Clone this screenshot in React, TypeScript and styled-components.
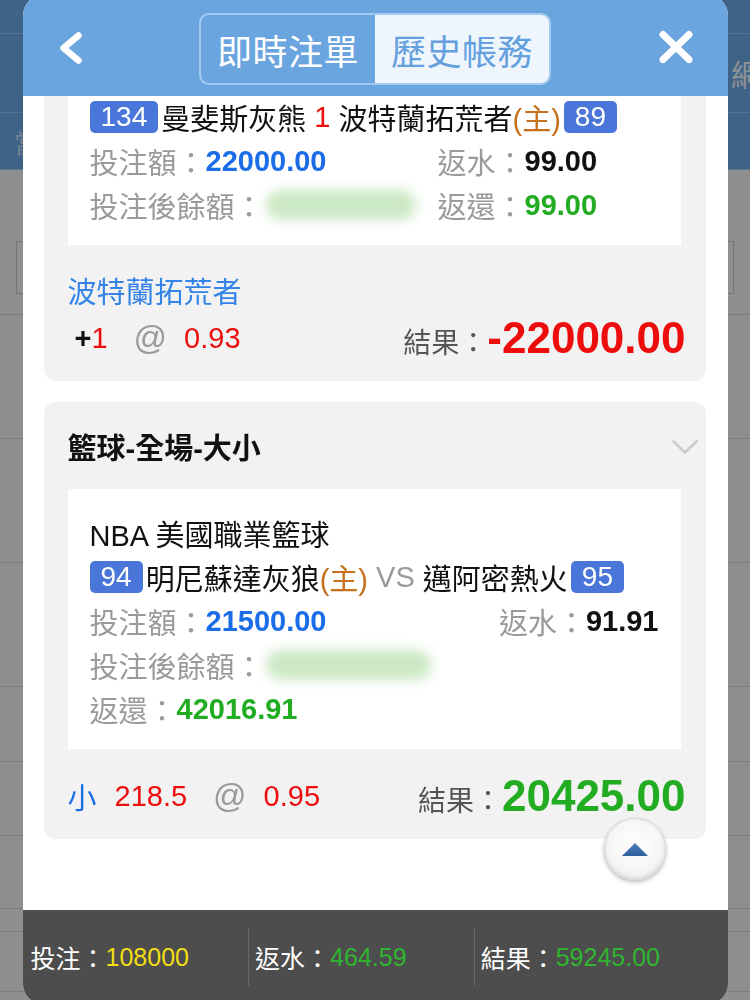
import React, { useLayoutEffect, useRef } from "react";
import styled, { createGlobalStyle } from "styled-components";

const GlobalStyle = createGlobalStyle`
  html, body { margin: 0; padding: 0; }
  body {
    width: 750px;
    height: 1000px;
    overflow: hidden;
    font-family: "Liberation Sans", "Noto Sans CJK TC", sans-serif;
    -webkit-font-smoothing: antialiased;
  }
  * { box-sizing: border-box; }
`;

/* ---------- background page ---------- */
const Root = styled.div`
  font-family: "Liberation Sans", "Noto Sans CJK TC", sans-serif;
`;

const Page = styled.div`
  width: 750px;
  height: 1000px;
  background: #eeeeee;
  display: flex;
  flex-direction: column;
  overflow: hidden;
`;

const PageHeader = styled.div`
  height: 170px;
  flex: none;
  background: #6aa5e0;
  display: flex;
  flex-direction: column;
`;

const HeaderStrip = styled.div<{ $h: number; $pad: number; $dim?: boolean }>`
  height: ${(p) => p.$h}px;
  flex: none;
  border-bottom: 1px solid rgba(255, 255, 255, 0.3);
  display: flex;
  align-items: center;
  padding-left: ${(p) => p.$pad}px;
  white-space: nowrap;
  overflow: hidden;
  color: ${(p) => (p.$dim ? "rgba(255,255,255,0.55)" : "rgba(255,255,255,0.9)")};
  font-size: ${(p) => (p.$dim ? 26 : 30)}px;
`;

const FilterBar = styled.div`
  height: 145px;
  flex: none;
  padding-top: 71px;
  border-bottom: 1px solid #cfcfcf;
`;

const FilterBox = styled.div`
  height: 53px;
  margin: 0 16px;
  border: 1px solid #b6ceb6;
  background: #f1f1f1;
`;

const ListRow = styled.div<{ $h: number }>`
  height: ${(p) => p.$h}px;
  flex: none;
  border-bottom: 1px solid #d0d0d0;
`;

/* ---------- overlay & modal ---------- */
const Overlay = styled.div`
  position: fixed;
  inset: 0;
  background: rgba(0, 0, 0, 0.4);
  display: flex;
  justify-content: center;
  align-items: flex-start;
`;

const Modal = styled.div`
  position: relative;
  width: 705px;
  height: 1010px;
  margin-top: -6px;
  border-radius: 22px 22px 20px 20px;
  overflow: hidden;
  background: #ffffff;
  display: flex;
  flex-direction: column;
`;

const Header = styled.header`
  height: 102px;
  flex: none;
  padding: 6px 34px 0;
  background: #6aa5e0;
  display: grid;
  grid-template-columns: 1fr auto 1fr;
  align-items: center;
`;

const IconButton = styled.div<{ $end?: boolean }>`
  justify-self: ${(p) => (p.$end ? "end" : "start")};
  display: flex;
  align-items: center;
  margin-top: ${(p) => (p.$end ? -2 : 0)}px;
`;

const Tabs = styled.div`
  display: flex;
  width: 352px;
  height: 72px;
  margin-top: 2px;
  border: 2px solid #a3cbf2;
  border-radius: 10px;
  overflow: hidden;
`;

const Tab = styled.div<{ $active?: boolean }>`
  flex: 1;
  display: flex;
  align-items: center;
  justify-content: center;
  font-size: 35px;
  letter-spacing: 0.5px;
  color: ${(p) => (p.$active ? "#64a0de" : "#ffffff")};
  background: ${(p) => (p.$active ? "#eef5fc" : "transparent")};
`;

const Body = styled.div`
  flex: 1;
  overflow: hidden;
`;

const BodyInner = styled.div`
  padding: 20px 22px 90px 21px;
  display: flex;
  flex-direction: column;
  gap: 21px;
`;

const Card = styled.section`
  background: #f2f2f2;
  border-radius: 12px;
  padding: 0 25px 18px 24px;
  display: flex;
  flex-direction: column;
`;

const TitleRow = styled.div`
  height: 87px;
  display: flex;
  align-items: center;
  justify-content: space-between;
`;

const Title = styled.h3`
  margin: 0;
  font-size: 29px;
  font-weight: 700;
  color: #111;
`;

const Chevron = styled.svg`
  margin-right: -18px;
  margin-top: 2px;
`;

const Detail = styled.div`
  background: #ffffff;
  padding: 22px 22px 18px;
  display: flex;
  flex-direction: column;
`;

const Line = styled.div<{ $split?: boolean; $spread?: boolean }>`
  height: 44px;
  font-size: 29px;
  color: #111;
  white-space: nowrap;
  display: ${(p) => (p.$split ? "grid" : "flex")};
  grid-template-columns: 348px 1fr;
  align-items: center;
  justify-content: ${(p) => (p.$spread ? "space-between" : "flex-start")};
`;

const Cell = styled.div`
  display: flex;
  align-items: center;
`;

const Label = styled.span`
  color: #9a9a9a;
`;

const Value = styled.span<{ $c: string }>`
  font-weight: 700;
  color: ${(p) => p.$c};
`;

const Badge = styled.span`
  display: inline-flex;
  align-items: center;
  height: 32px;
  padding: 0 11px;
  margin: 0 3px;
  border-radius: 5px;
  background: #4a76d9;
  color: #ffffff;
  font-size: 28px;
  &:first-child { margin-left: 0; }
`;

const Tint = styled.span<{ $c: string }>`
  color: ${(p) => p.$c};
  white-space: pre;
`;

const Blur = styled.span<{ $w: number }>`
  display: inline-block;
  width: ${(p) => p.$w}px;
  height: 30px;
  margin-left: 2px;
  border-radius: 15px;
  background: #cbe8c4;
  filter: blur(6px);
`;

const Pick = styled.div`
  height: 46px;
  margin-top: 22px;
  display: flex;
  align-items: center;
  font-size: 29px;
  color: #3383e8;
`;

const BetRow = styled.div<{ $first?: boolean }>`
  height: 50px;
  margin-top: ${(p) => (p.$first ? 22 : 0)}px;
  margin-right: -5px;
  display: flex;
  align-items: center;
  justify-content: space-between;
  white-space: nowrap;
`;

const Odds = styled.div`
  display: flex;
  align-items: center;
  font-size: 29px;
`;

const OddsPart = styled.span<{ $c: string; $ml?: number; $bold?: boolean }>`
  color: ${(p) => p.$c};
  margin-left: ${(p) => p.$ml ?? 0}px;
  font-weight: ${(p) => (p.$bold ? 700 : 400)};
`;

const At = styled.span`
  color: #9a9a9a;
  font-size: 33px;
  margin: 0 17px 0 26px;
`;

const Result = styled.div`
  display: flex;
  align-items: baseline;
`;

const ResultLabel = styled.span`
  font-size: 28px;
  color: #555;
`;

const ResultValue = styled.span<{ $c: string }>`
  font-size: 44px;
  font-weight: 700;
  color: ${(p) => p.$c};
`;

const ScrollTop = styled.button`
  position: absolute;
  left: 581px;
  top: 824px;
  width: 62px;
  height: 62px;
  padding: 0;
  border-radius: 50%;
  border: 1px solid #d4d4d4;
  background: radial-gradient(circle at 50% 45%, #ffffff 0%, #f6f6f6 55%, #e2e2e2 100%);
  box-shadow: 0 2px 4px rgba(0, 0, 0, 0.28), inset 0 -2px 3px rgba(0, 0, 0, 0.06);
  display: flex;
  align-items: center;
  justify-content: center;
`;

const Footer = styled.footer`
  height: 94px;
  flex: none;
  background: #4d4d4d;
  display: flex;
  align-items: center;
`;

const Stat = styled.div`
  width: 32%;
  height: 58px;
  padding-left: 8px;
  display: flex;
  align-items: center;
  font-size: 25px;
  color: #ffffff;
  white-space: nowrap;
  & + & {
    border-left: 1px solid #686868;
    padding-left: 6px;
  }
`;

const StatValue = styled.span<{ $c: string }>`
  color: ${(p) => p.$c};
`;

const RED = "#ee0d0d";
const BLUE = "#1a6de6";
const GREEN = "#22ac22";
const ORANGE = "#c6701c";

const ChevronDown = () => (
  <Chevron width="28" height="16" viewBox="0 0 28 16">
    <polyline points="1.5,1.5 14,13.5 26.5,1.5" fill="none" stroke="#cccccc" strokeWidth="2.5" />
  </Chevron>
);

export default function App() {
  const bodyRef = useRef<HTMLDivElement>(null);
  const firstRef = useRef<HTMLElement>(null);

  useLayoutEffect(() => {
    document.documentElement.lang = "zh-Hant-TW";
    const body = bodyRef.current;
    const first = firstRef.current;
    if (body && first) {
      body.scrollTop = first.offsetTop - body.offsetTop + 154;
    }
  }, []);

  return (
    <Root lang="zh-Hant-TW">
      <GlobalStyle />
      <Page>
        <PageHeader>
          <HeaderStrip $h={34} $pad={0} />
          <HeaderStrip $h={79} $pad={731}>網站公告</HeaderStrip>
          <HeaderStrip $h={57} $pad={14} $dim>當日帳務</HeaderStrip>
        </PageHeader>
        <FilterBar>
          <FilterBox />
        </FilterBar>
        {[124, 124, 124, 75, 74, 73, 23, 60].map((h, i) => (
          <ListRow key={i} $h={h} />
        ))}
      </Page>

      <Overlay>
        <Modal>
          <Header>
            <IconButton>
              <svg width="26" height="32" viewBox="0 0 26 32">
                <polyline
                  points="21.5,3.5 6.5,16 21.5,28.5"
                  fill="none"
                  stroke="#ffffff"
                  strokeWidth="6.5"
                  strokeLinecap="round"
                  strokeLinejoin="round"
                />
              </svg>
            </IconButton>
            <Tabs>
              <Tab>即時注單</Tab>
              <Tab $active>歷史帳務</Tab>
            </Tabs>
            <IconButton $end>
              <svg width="36" height="34" viewBox="0 0 36 34">
                <path d="M5 4.5 L31 29.5 M31 4.5 L5 29.5" stroke="#ffffff" strokeWidth="7" strokeLinecap="round" />
              </svg>
            </IconButton>
          </Header>

          <Body ref={bodyRef}>
            <BodyInner>
              <Card ref={firstRef}>
                <TitleRow>
                  <Title>籃球-全場-讓分</Title>
                  <ChevronDown />
                </TitleRow>
                <Detail>
                  <Line>NBA 美國職業籃球</Line>
                  <Line>
                    <Badge>134</Badge>曼斐斯灰熊<Tint $c={RED}> 1 </Tint>波特蘭拓荒者
                    <Tint $c={ORANGE}>(主)</Tint>
                    <Badge>89</Badge>
                  </Line>
                  <Line $split>
                    <Cell>
                      <Label>投注額：</Label>
                      <Value $c={BLUE}>22000.00</Value>
                    </Cell>
                    <Cell>
                      <Label>返水：</Label>
                      <Value $c="#111">99.00</Value>
                    </Cell>
                  </Line>
                  <Line $split>
                    <Cell>
                      <Label>投注後餘額：</Label>
                      <Blur $w={150} />
                    </Cell>
                    <Cell>
                      <Label>返還：</Label>
                      <Value $c={GREEN}>99.00</Value>
                    </Cell>
                  </Line>
                </Detail>
                <Pick>波特蘭拓荒者</Pick>
                <BetRow>
                  <Odds>
                    <OddsPart $c="#111" $ml={7} $bold>+</OddsPart>
                    <OddsPart $c={RED}>1</OddsPart>
                    <At>@</At>
                    <OddsPart $c={RED}>0.93</OddsPart>
                  </Odds>
                  <Result>
                    <ResultLabel>結果：</ResultLabel>
                    <ResultValue $c={RED}>-22000.00</ResultValue>
                  </Result>
                </BetRow>
              </Card>

              <Card>
                <TitleRow>
                  <Title>籃球-全場-大小</Title>
                  <ChevronDown />
                </TitleRow>
                <Detail>
                  <Line>NBA 美國職業籃球</Line>
                  <Line>
                    <Badge>94</Badge>明尼蘇達灰狼<Tint $c={ORANGE}>(主)</Tint>
                    <Tint $c="#9a9a9a"> VS </Tint>邁阿密熱火<Badge>95</Badge>
                  </Line>
                  <Line $spread>
                    <Cell>
                      <Label>投注額：</Label>
                      <Value $c={BLUE}>21500.00</Value>
                    </Cell>
                    <Cell>
                      <Label>返水：</Label>
                      <Value $c="#111">91.91</Value>
                    </Cell>
                  </Line>
                  <Line>
                    <Label>投注後餘額：</Label>
                    <Blur $w={165} />
                  </Line>
                  <Line>
                    <Label>返還：</Label>
                    <Value $c={GREEN}>42016.91</Value>
                  </Line>
                </Detail>
                <BetRow $first>
                  <Odds>
                    <OddsPart $c={BLUE}>小</OddsPart>
                    <OddsPart $c={RED} $ml={18}>218.5</OddsPart>
                    <At>@</At>
                    <OddsPart $c={RED}>0.95</OddsPart>
                  </Odds>
                  <Result>
                    <ResultLabel>結果：</ResultLabel>
                    <ResultValue $c={GREEN}>20425.00</ResultValue>
                  </Result>
                </BetRow>
              </Card>
            </BodyInner>
          </Body>

          <ScrollTop aria-label="top">
            <svg width="26" height="13" viewBox="0 0 26 13">
              <defs>
                <linearGradient id="tri" x1="0" y1="0" x2="0" y2="1">
                  <stop offset="0" stopColor="#4a7fbf" />
                  <stop offset="1" stopColor="#2f5f9c" />
                </linearGradient>
              </defs>
              <polygon points="13,0 26,13 0,13" fill="url(#tri)" />
            </svg>
          </ScrollTop>

          <Footer>
            <Stat>
              投注：<StatValue $c="#f1df12">108000</StatValue>
            </Stat>
            <Stat>
              返水：<StatValue $c="#2fb52f">464.59</StatValue>
            </Stat>
            <Stat>
              結果：<StatValue $c="#2fb52f">59245.00</StatValue>
            </Stat>
          </Footer>
        </Modal>
      </Overlay>
    </Root>
  );
}
